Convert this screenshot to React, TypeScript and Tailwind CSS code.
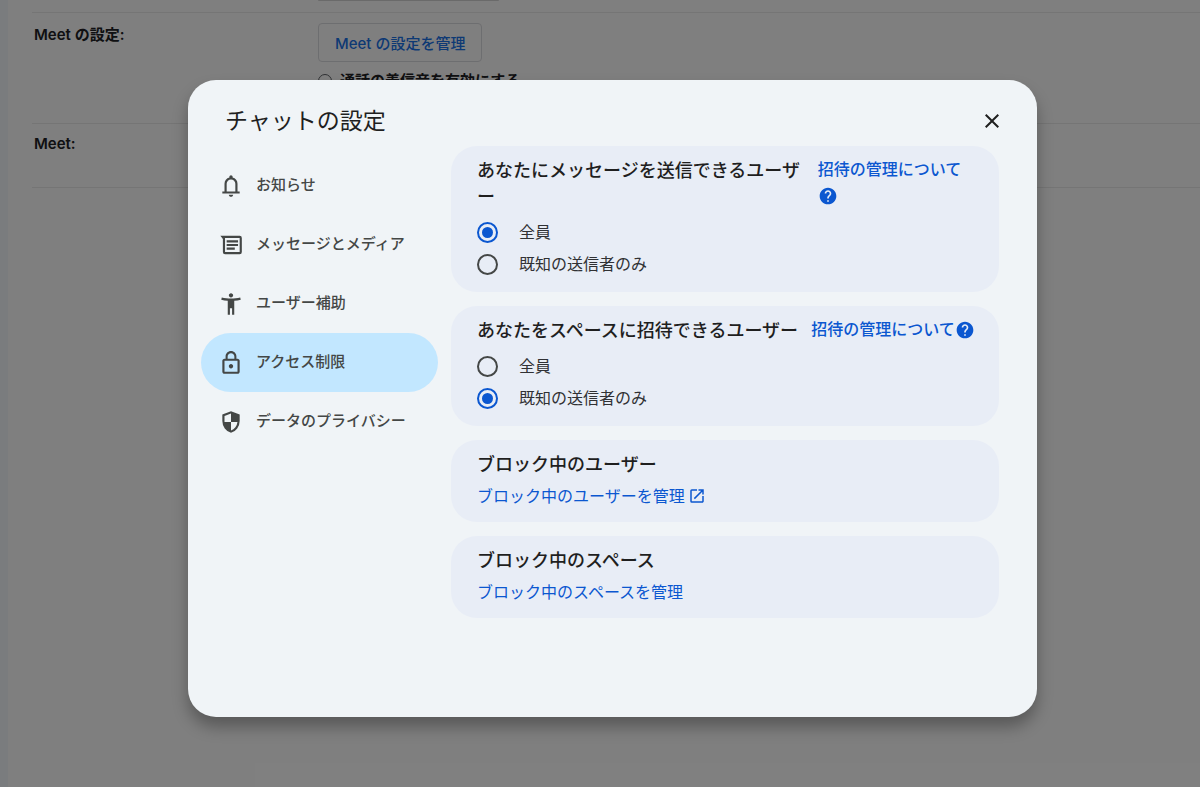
import type { ReactNode } from "react";
import {
  MdAccessibilityNew,
  MdClose,
  MdHelp,
  MdLockOutline,
  MdOpenInNew,
} from "react-icons/md";

function BellIcon() {
  return (
    <svg viewBox="0 0 24 24" className="size-[26px]" fill="currentColor" aria-hidden="true">
      <path d="M4 19v-2h2v-7q0-2.075 1.25-3.688T10.5 4.2v-.7q0-.625.438-1.062T12 2t1.063.438T13.5 3.5v.7q2 .5 3.25 2.113T18 10v7h2v2zm8 3q-.825 0-1.412-.587T10 20h4q0 .825-.587 1.413T12 22m-4-5h8v-7q0-1.65-1.175-2.825T12 6 9.175 7.175 8 10z" />
    </svg>
  );
}

function MessageIcon() {
  return (
    <svg viewBox="0 0 24 24" className="size-[26px]" fill="none" stroke="currentColor" strokeWidth="2" aria-hidden="true">
      <path d="M4.2 4.5H20a1 1 0 0 1 1 1v13a1 1 0 0 1-1 1H6.5a1 1 0 0 1-1-1V6.2L4.2 4.5Z" />
      <path d="M8 8.7h10.5M8 12h10.5M8 15.3h7.5" />
    </svg>
  );
}

function ShieldIcon() {
  return (
    <svg viewBox="0 0 24 24" className="size-[26px]" fill="currentColor" aria-hidden="true">
      <path d="M12 22q-3.475-.875-5.738-3.988T4 11.1V5l8-3 8 3v6.1q0 3.8-2.262 6.913T12 22m0-2.1q2.425-.75 4.05-2.963T17.95 12H12V4.125l-6 2.25v5.175q0 .175.05.45H12z" />
    </svg>
  );
}

type NavItem = { label: string; icon: ReactNode; active?: boolean };

const navItems: NavItem[] = [
  { label: "お知らせ", icon: <BellIcon /> },
  { label: "メッセージとメディア", icon: <MessageIcon /> },
  { label: "ユーザー補助", icon: <MdAccessibilityNew className="size-[26px]" /> },
  { label: "アクセス制限", icon: <MdLockOutline className="size-[26px]" />, active: true },
  { label: "データのプライバシー", icon: <ShieldIcon /> },
];

const options = ["全員", "既知の送信者のみ"];

function RadioCard({ name, title, selected }: { name: string; title: string; selected: number }) {
  return (
    <section className="rounded-[26px] bg-[#e8edf6] pt-[10px] pr-6 pb-3 pl-[26px]">
      <div className="flex items-start gap-[13px]">
        <h2 id={name} className="pt-[2px] text-[18px] leading-[26px] font-medium break-all text-[#1f1f1f]">
          {title}
        </h2>
        <a href="#invites" className="text-base leading-[26px] font-medium text-[#0b57d0]">
          招待の管理について
          <MdHelp className="inline size-5 align-[-5px]" />
        </a>
      </div>
      <div role="radiogroup" aria-labelledby={name} className="mt-[6px]">
        {options.map((option, i) => (
          <label key={option} className="flex h-8 items-center gap-[21px] text-base text-[#303134]">
            <input
              type="radio"
              name={name}
              defaultChecked={i === selected}
              className="grid size-[21px] shrink-0 appearance-none place-items-center rounded-full border-2 border-[#444746] before:size-[11px] before:rounded-full before:content-[''] checked:border-[#0b57d0] checked:before:bg-[#0b57d0]"
            />
            {option}
          </label>
        ))}
      </div>
    </section>
  );
}

function LinkCard({ title, link, external }: { title: string; link: string; external?: boolean }) {
  return (
    <section className="rounded-[26px] bg-[#e8edf6] pt-3 pr-6 pb-[13px] pl-[26px]">
      <h2 className="text-[18px] leading-[26px] font-medium text-[#1f1f1f]">{title}</h2>
      <a href="#manage" className="mt-[5px] flex items-center gap-[3px] text-base leading-[26px] text-[#0b57d0]">
        {link}
        {external && <MdOpenInNew className="size-[18px]" />}
      </a>
    </section>
  );
}

export default function App() {
  return (
    <div className="relative min-h-screen overflow-hidden bg-white font-['Inter','Noto_Sans_CJK_JP',sans-serif]">
      <div className="flex min-h-screen" aria-hidden="true">
        <div className="w-2 bg-[#f4f8fc]" />
        <main className="flex-1 pl-6 text-[15px] text-[#202124]">
          <div className="flex h-[13px] items-start border-b border-[#ebebeb] pl-[286px]">
            <div className="h-px w-[181px] rounded-b bg-[#d4d4d4]" />
          </div>
          <div className="flex h-[111px] border-b border-[#ebebeb] pt-[10px]">
            <div className="w-[286px] pl-[2px] leading-6 font-semibold">Meet の設定:</div>
            <div className="flex flex-col items-start">
              <button type="button" className="h-[39px] rounded border border-[#dadce0] px-4 pt-[3px] font-medium text-[#1a73e8]">
                Meet の設定を管理
              </button>
              <label className="mt-[7px] flex items-center gap-2 leading-6 font-semibold">
                <input type="radio" className="size-[14px] appearance-none rounded-full border border-[#5f6368]" />
                通話の着信音を有効にする
              </label>
            </div>
          </div>
          <div className="h-16 border-b border-[#ebebeb] pt-2 pl-[2px] leading-6 font-semibold">Meet:</div>
        </main>
      </div>

      <div className="absolute inset-0 flex items-center justify-center bg-black/50 pt-[10px] pl-[25px]">
        <div
          role="dialog"
          aria-modal="true"
          aria-labelledby="dialog-title"
          className="w-full max-w-[849px] rounded-[28px] bg-[#f0f4f7] pb-[99px] shadow-[0_10px_16px_rgba(0,0,0,0.3)]"
        >
          <header className="flex h-[66px] items-center justify-between pt-4 pr-[33px] pl-[37px]">
            <h1 id="dialog-title" className="text-[23px] leading-8 text-[#1f1f1f]">
              チャットの設定
            </h1>
            <button type="button" aria-label="閉じる" className="text-[#1f1f1f]">
              <MdClose className="size-6" />
            </button>
          </header>
          <div className="flex gap-[13px] pr-[38px] pl-[13px]">
            <nav className="w-[237px] shrink-0 pt-[10px]">
              {navItems.map((item) => (
                <a
                  key={item.label}
                  href="#section"
                  aria-current={item.active ? "page" : undefined}
                  className={`flex h-[59px] items-center gap-3 rounded-full pl-[17px] text-[15px] font-medium text-[#444746] ${
                    item.active ? "bg-[#c2e7ff]" : ""
                  }`}
                >
                  {item.icon}
                  {item.label}
                </a>
              ))}
            </nav>
            <div className="flex min-w-0 flex-1 flex-col gap-[14px]">
              <RadioCard name="message-senders" title="あなたにメッセージを送信できるユーザー" selected={0} />
              <RadioCard name="space-inviters" title="あなたをスペースに招待できるユーザー" selected={1} />
              <LinkCard title="ブロック中のユーザー" link="ブロック中のユーザーを管理" external />
              <LinkCard title="ブロック中のスペース" link="ブロック中のスペースを管理" />
            </div>
          </div>
        </div>
      </div>
    </div>
  );
}
